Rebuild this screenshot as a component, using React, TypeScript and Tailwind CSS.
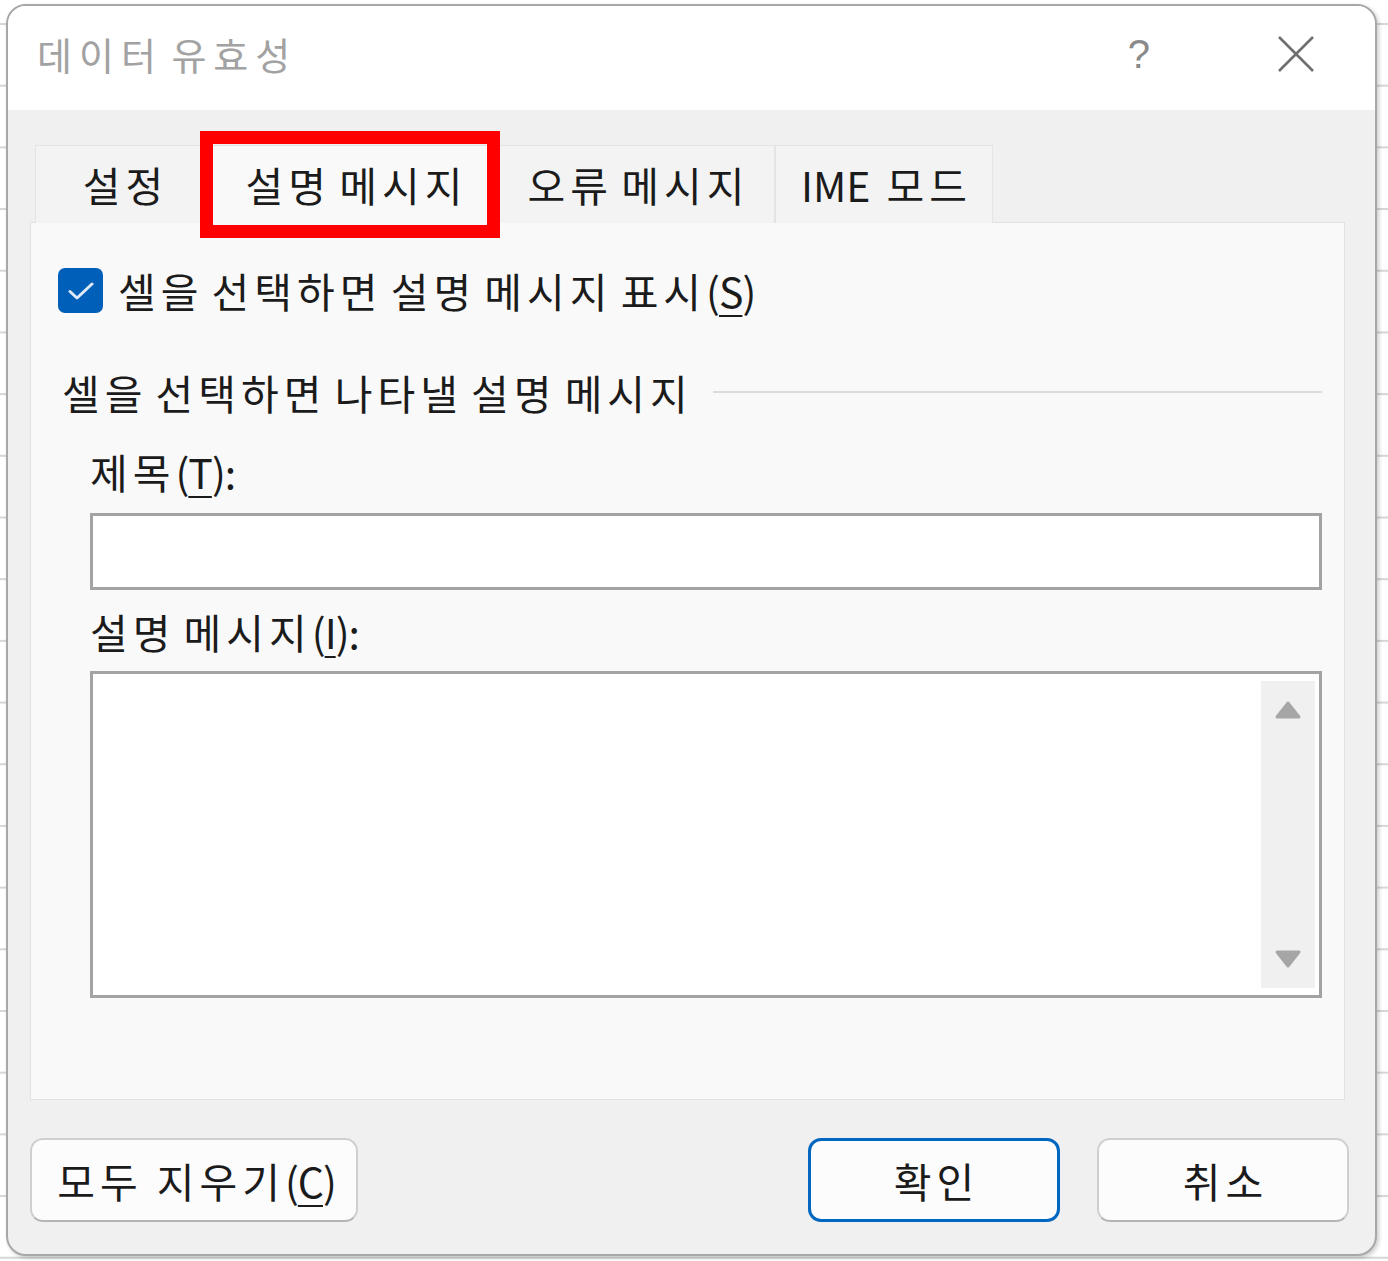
import React from "react";

const font = "font-['Noto_Sans_CJK_KR','Noto_Sans',sans-serif]";

const tabs = [
  { label: "설정", w: "w-[176px]", active: false },
  { label: "설명 메시지", w: "w-[286px]", active: true },
  { label: "오류 메시지", w: "w-[278px]", active: false },
  { label: "IME 모드", w: "w-[218px]", active: false },
];

// access key, e.g. (S) with the letter underlined
const Key = ({ k }: { k: string }) => (
  <span className="tracking-[-1px]">
    (<span className="underline decoration-[2px] underline-offset-[7px]">{k}</span>)
  </span>
);

const TabLabel = ({ label }: { label: string }) =>
  label.startsWith("IME") ? (
    <>
      <span className="tracking-normal">IME</span>
      <span className="ml-[16px]">모드</span>
    </>
  ) : (
    <>{label}</>
  );

const App = () => {
  return (
    <div
      className={`${font} relative h-[1261px] w-[1388px] overflow-hidden bg-white bg-[linear-gradient(#d6d6d6_2px,transparent_2px)] bg-[length:100%_61.7px] bg-[position:0_23px] text-[#1b1b1b]`}
    >
      {/* dialog */}
      <div className="ml-[6px] mt-[4px] flex h-[1252px] w-[1371px] flex-col overflow-hidden rounded-[20px] border-2 border-[#a8a8a8] bg-[#f0f0f0] shadow-[2px_2px_4px_rgba(0,0,0,0.2)]">
        {/* title bar */}
        <div className="flex h-[104px] shrink-0 items-center bg-white pb-[8px] pl-[29px]">
          <span className="text-[38px] leading-none tracking-[7px] text-[#a2a2a2] [word-spacing:-7px]">데이터 유효성</span>
          <span className="ml-auto mr-[128px] font-['Liberation_Sans',sans-serif] text-[40px] leading-none text-[#8a8a8a]">?</span>
          <svg width="36" height="36" viewBox="0 0 36 36" className="mr-[61px]">
            <path d="M1 1L35 35M35 1L1 35" stroke="#6f6f6f" strokeWidth="2.6" />
          </svg>
        </div>

        {/* body */}
        <div className="flex flex-1 flex-col pl-[22px] pr-[26px] tracking-[5px] [word-spacing:-6px]">
          {/* tabs */}
          <div className="relative mt-[35px] flex pl-[5px]">
            {tabs.map((t) => (
              <div
                key={t.label}
                className={`${t.w} relative z-10 -mb-px flex h-[78px] items-center justify-center border-x border-t pl-[5px] text-[41px] leading-none ${
                  t.active ? "border-[#e2e2e2] bg-[#f9f9f9]" : "border-[#e4e4e4] bg-[#f3f3f3]"
                }`}
              >
                <TabLabel label={t.label} />
              </div>
            ))}
            {/* highlight box */}
            <div className="absolute left-[170px] top-[-14px] z-20 h-[107px] w-[300px] border-[13px] border-[#ff0000]" />
          </div>

          {/* panel */}
          <div className="mr-[4px] flex h-[878px] flex-col border border-[#e2e2e2] bg-[#f9f9f9]">
            <div className="ml-[27px] mt-[45px] flex h-[45px] items-center gap-[15px]">
              <div className="flex h-[45px] w-[45px] items-center justify-center rounded-[7px] bg-[#005fb8]">
                <svg width="26" height="18" viewBox="0 0 26 18">
                  <path d="M2 9.5L9 16L24 2" fill="none" stroke="#dfe9f5" strokeWidth="3" strokeLinecap="round" strokeLinejoin="round" />
                </svg>
              </div>
              <span className="text-[41px] leading-none">
                셀을 선택하면 설명 메시지 표시<Key k="S" />
              </span>
            </div>

            <div className="ml-[31px] mr-[22px] mt-[56px] flex h-[46px] items-center gap-[20px]">
              <span className="whitespace-nowrap text-[41px] leading-none">셀을 선택하면 나타낼 설명 메시지</span>
              <div className="h-[2px] flex-1 bg-[#dcdcdc]" />
            </div>

            <div className="ml-[59px] mr-[22px] flex flex-col">
              <div className="mt-[33px] flex h-[46px] items-center text-[41px] leading-none">
                제목<Key k="T" />:
              </div>
              <div className="mt-[19px] h-[77px] border-[3px] border-[#a3a3a3] bg-white" />
              <div className="mt-[18px] flex h-[46px] items-center text-[41px] leading-none">
                설명 메시지<Key k="I" />:
              </div>
              <div className="mt-[17px] flex h-[327px] justify-end border-[3px] border-[#a3a3a3] bg-white pb-[7px] pr-[4px] pt-[7px]">
                <div className="flex w-[54px] flex-col items-center justify-between bg-[#f0f0f0] py-[19px]">
                  <svg width="28" height="20" viewBox="0 0 28 20">
                    <path d="M14 3L25 17H3Z" fill="#a6a6a6" stroke="#a6a6a6" strokeWidth="3" strokeLinejoin="round" />
                  </svg>
                  <svg width="28" height="20" viewBox="0 0 28 20">
                    <path d="M14 17L25 3H3Z" fill="#a6a6a6" stroke="#a6a6a6" strokeWidth="3" strokeLinejoin="round" />
                  </svg>
                </div>
              </div>
            </div>
          </div>

          {/* buttons */}
          <div className="mt-[38px] flex h-[84px] items-stretch text-[41px] leading-none text-[#1b1b1b]">
            <button className="w-[328px] rounded-[13px] border-2 border-[#cfcfcf] border-b-[#b5b5b5] bg-[#fcfcfc] pl-[5px]">
              모두 지우기<Key k="C" />
            </button>
            <button className="ml-auto w-[252px] rounded-[13px] border-[3px] border-[#0067c0] bg-[#fcfcfc] pl-[5px]">
              확인
            </button>
            <button className="ml-[37px] w-[252px] rounded-[13px] border-2 border-[#cfcfcf] border-b-[#b5b5b5] bg-[#fcfcfc] pl-[5px]">
              취소
            </button>
          </div>
        </div>
      </div>
    </div>
  );
};

export default App;
